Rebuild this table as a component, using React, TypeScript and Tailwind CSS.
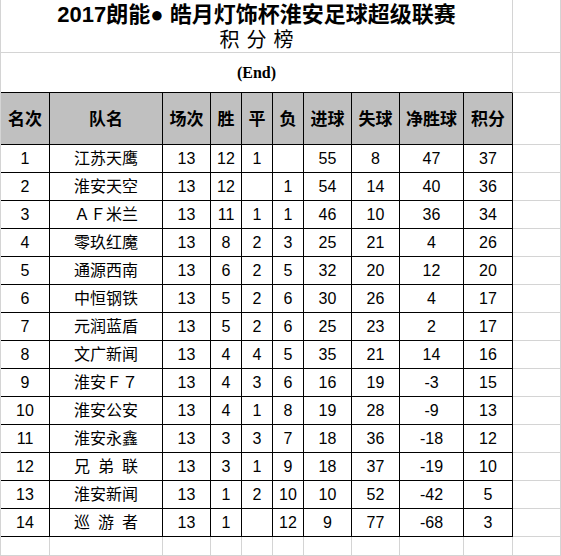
const rows: [string, string, string, string, string, string, string, string, string, string][] = [
  ['1', '江苏天鹰', '13', '12', '1', '', '55', '8', '47', '37'],
  ['2', '淮安天空', '13', '12', '', '1', '54', '14', '40', '36'],
  ['3', 'ＡＦ米兰', '13', '11', '1', '1', '46', '10', '36', '34'],
  ['4', '零玖红魔', '13', '8', '2', '3', '25', '21', '4', '26'],
  ['5', '通源西南', '13', '6', '2', '5', '32', '20', '12', '20'],
  ['6', '中恒钢铁', '13', '5', '2', '6', '30', '26', '4', '17'],
  ['7', '元润蓝盾', '13', '5', '2', '6', '25', '23', '2', '17'],
  ['8', '文广新闻', '13', '4', '4', '5', '35', '21', '14', '16'],
  ['9', '淮安Ｆ７', '13', '4', '3', '6', '16', '19', '-3', '15'],
  ['10', '淮安公安', '13', '4', '1', '8', '19', '28', '-9', '13'],
  ['11', '淮安永鑫', '13', '3', '3', '7', '18', '36', '-18', '12'],
  ['12', '兄\u2002弟\u2002联', '13', '3', '1', '9', '18', '37', '-19', '10'],
  ['13', '淮安新闻', '13', '1', '2', '10', '10', '52', '-42', '5'],
  ['14', '巡\u2002游\u2002者', '13', '1', '', '12', '9', '77', '-68', '3'],
]

const headers = ['名次', '队名', '场次', '胜', '平', '负', '进球', '失球', '净胜球', '积分']

const font = { fontFamily: '"Liberation Sans", "Noto Sans CJK SC", sans-serif' }

export default function App() {
  return (
    <div className="h-[556px] w-[561px] overflow-hidden bg-white text-black" style={font}>
      <div className="grid grid-cols-[49px_113px_48px_31px_31px_31px_48px_48px_64px_49px_48px] border-l border-[#d4d4d4]">
        {/* title */}
        <div className="col-span-10 flex h-[53px] flex-col items-center border-r border-b border-[#d4d4d4] pt-[2px]">
          <div className="text-[22px] font-bold leading-[26px]">2017朗能● 皓月灯饰杯淮安足球超级联赛</div>
          <div className="text-[20px] leading-[24px] tracking-[7px] pl-[7px]">积分榜</div>
        </div>
        <div className="h-[53px] border-r border-b border-[#d4d4d4]" />

        {/* (End) */}
        <div className="col-span-10 flex h-[40px] items-center justify-center border-r border-b border-r-[#d4d4d4] border-b-black">
          <span className="text-[16px] font-bold" style={{ fontFamily: '"Liberation Serif", serif' }}>
            (End)
          </span>
        </div>
        <div className="h-[40px] border-r border-b border-[#d4d4d4]" />

        {/* header */}
        {headers.map((h) => (
          <div
            key={h}
            className="flex h-[52px] items-center justify-center border-r border-b border-black bg-[#c0c0c0] pt-[3px] text-[17px] font-bold"
          >
            {h}
          </div>
        ))}
        <div className="h-[52px] border-r border-b border-[#d4d4d4]" />

        {/* data */}
        {rows.map((r) => (
          <div key={r[0]} className="contents">
            {r.map((c, i) => (
              <div
                key={i}
                className="flex h-[28px] items-center justify-center border-r border-b border-black text-[16px]"
              >
                {c}
              </div>
            ))}
            <div className="h-[28px] border-r border-b border-[#d4d4d4]" />
          </div>
        ))}

        {/* empty sheet row */}
        {Array.from({ length: 11 }).map((_, i) => (
          <div key={i} className="h-[19px] border-r border-b border-[#d4d4d4]" />
        ))}
      </div>
    </div>
  )
}
